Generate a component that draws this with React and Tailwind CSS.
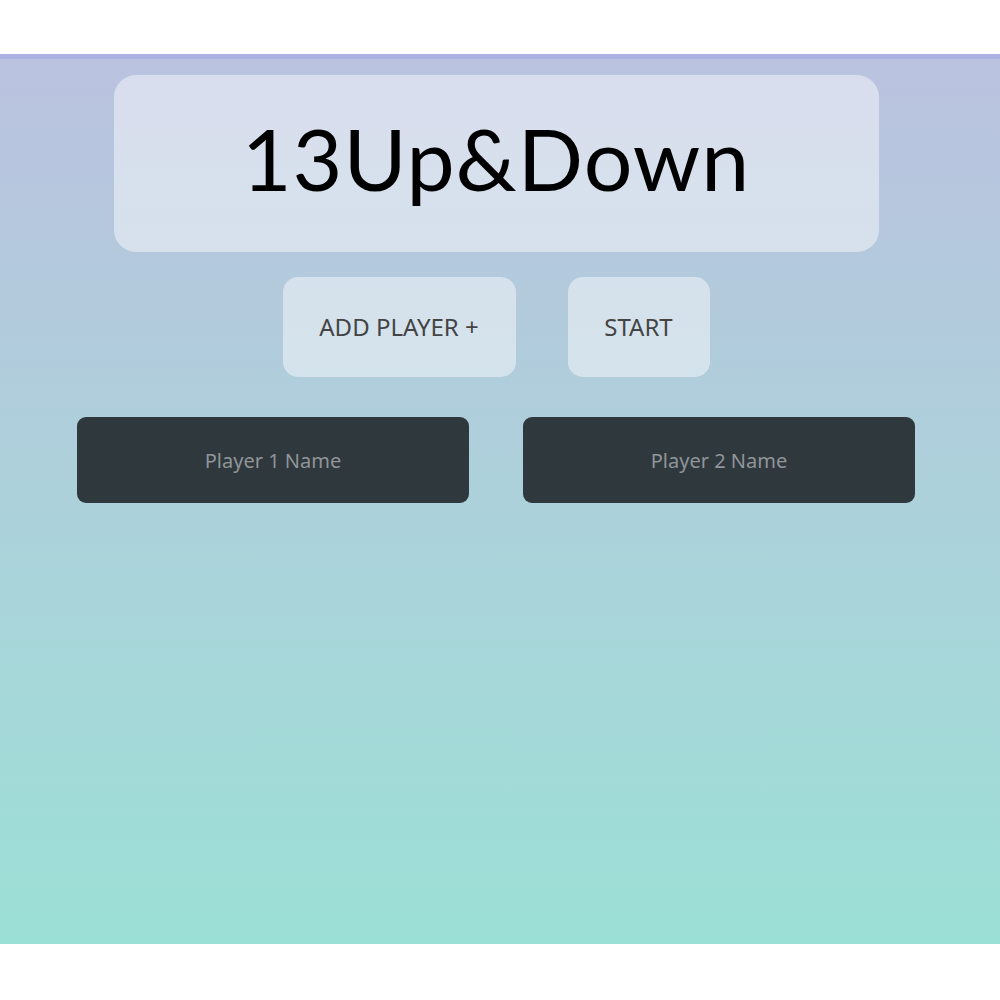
import React from "react";

export default function App() {
  return (
    <div className="w-[1000px] h-[1000px] bg-white pt-[54px]">
      <div className="h-[890px] border-t-[5px] border-[#aab3e3] bg-gradient-to-b from-[#bac2df] to-[#9be0d6]">
        <div className="w-[992px] flex flex-col items-center">
          <div className="mt-[16px] w-[765px] h-[177px] rounded-[22px] bg-white/45 flex items-center justify-center">
            <h1 className="font-['Lato',sans-serif] text-[86px] leading-none text-black tracking-[1px] pb-[12px]">
              13Up&amp;Down
            </h1>
          </div>
          <div className="mt-[25px] flex gap-[52px]">
            <button className="w-[233px] h-[100px] rounded-[15px] bg-white/45 text-[#444] text-[24px] font-['Noto_Sans',sans-serif]">
              ADD PLAYER +
            </button>
            <button className="w-[142px] h-[100px] rounded-[15px] bg-white/45 text-[#444] text-[24px] font-['Noto_Sans',sans-serif]">
              START
            </button>
          </div>
          <div className="mt-[40px] flex gap-[54px]">
            <input
              placeholder="Player 1 Name"
              className="w-[392px] h-[86px] rounded-[9px] bg-[#2f383d] text-center text-[20px] text-white placeholder:text-[#8f9599] font-['Noto_Sans',sans-serif] outline-none"
            />
            <input
              placeholder="Player 2 Name"
              className="w-[392px] h-[86px] rounded-[9px] bg-[#2f383d] text-center text-[20px] text-white placeholder:text-[#8f9599] font-['Noto_Sans',sans-serif] outline-none"
            />
          </div>
        </div>
      </div>
    </div>
  );
}
